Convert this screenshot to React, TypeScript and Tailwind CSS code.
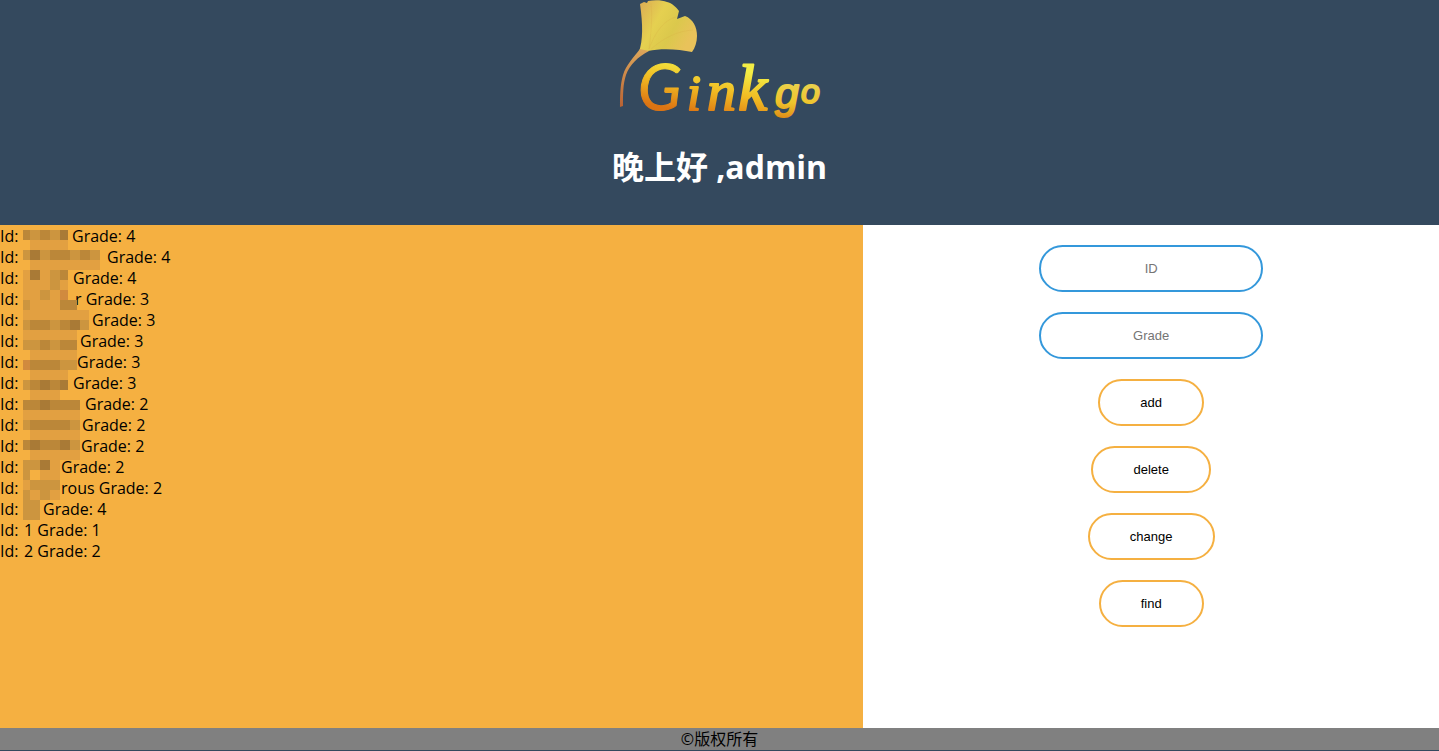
type Entry = { id?: string; gap?: string; grade: number };

const entries: Entry[] = [
  { gap: "w-12", grade: 4 },
  { gap: "w-[83px]", grade: 4 },
  { gap: "w-[49px]", grade: 4 },
  { gap: "w-[51px]", id: "r", grade: 3 },
  { gap: "w-[68px]", grade: 3 },
  { gap: "w-14", grade: 3 },
  { gap: "w-[53px]", grade: 3 },
  { gap: "w-[49px]", grade: 3 },
  { gap: "w-[61px]", grade: 2 },
  { gap: "w-[58px]", grade: 2 },
  { gap: "w-[57px]", grade: 2 },
  { gap: "w-[37px]", grade: 2 },
  { gap: "w-[37px]", id: "rous", grade: 2 },
  { gap: "w-[19px]", grade: 4 },
  { id: "1", grade: 1 },
  { id: "2", grade: 2 },
];

// One string per 10px band: shade letters by column, then the band's right edge.
const bands: [string, number][] = [
  ["dmdmD", 45], [".llll", 45], ["mDmddmdm", 77], [".lllllll", 77],
  ["lDlmd", 45], ["lllml", 45], ["llmlc", 45], ["mllldd", 54],
  ["lllllll", 66], ["mddmdDm", 66], ["llllll", 54], ["mmdmdd", 54],
  [".lllll", 54], ["cdddmm", 54], [".llll", 45], ["mdDdD", 45],
  [".lll", 37], ["ddDddd", 57], ["llllll", 57], ["mddddm", 57],
  [".lllll", 57], ["dDddDm", 60], [".lllll", 57], ["mmDl", 37],
  ["m.ll", 37], ["lmmm", 37], ["mlml", 37], ["mm", 17], ["mm", 17],
];

const shades: Record<string, string> = {
  l: "#e2a041",
  m: "#cc953f",
  c: "#d18a3e",
  d: "#bb8739",
  D: "#a97a36",
};

function Mosaic() {
  return (
    <svg
      className="pointer-events-none absolute left-[23px] top-[5px]"
      width="80"
      height="290"
      shapeRendering="crispEdges"
      aria-hidden="true"
    >
      {bands.map(([cells, end], row) =>
        cells.split("").map((cell, col) => {
          if (cell === ".") return null;
          const x = col === 0 ? 0 : col * 10 - 3;
          const right = Math.min(col * 10 + 7, end);
          return (
            <rect key={`${row}-${col}`} x={x} y={row * 10} width={Math.max(right - x, 0)} height="10" fill={shades[cell]} />
          );
        }),
      )}
    </svg>
  );
}

function Logo() {
  return (
    <svg className="overflow-visible" width="204" height="122" viewBox="0 0 204 122" role="img" aria-label="Ginkgo">
      <defs>
        <linearGradient id="leaf" x1="0" y1="0" x2="1" y2="0.5">
          <stop offset="0" stopColor="#dcaa55" />
          <stop offset="0.4" stopColor="#e5d050" />
          <stop offset="0.7" stopColor="#dbc84c" />
          <stop offset="1" stopColor="#e9c25a" />
        </linearGradient>
        <linearGradient id="stem" x1="0" y1="0" x2="0" y2="1">
          <stop offset="0" stopColor="#dda75b" />
          <stop offset="1" stopColor="#b96233" />
        </linearGradient>
        <linearGradient id="word" gradientUnits="userSpaceOnUse" x1="90" y1="64" x2="80" y2="114">
          <stop offset="0" stopColor="#f3ed45" />
          <stop offset="0.5" stopColor="#f0b922" />
          <stop offset="1" stopColor="#dc7413" />
        </linearGradient>
        <linearGradient id="tail" gradientUnits="userSpaceOnUse" x1="180" y1="78" x2="176" y2="120">
          <stop offset="0" stopColor="#e9d455" />
          <stop offset="0.6" stopColor="#efc42c" />
          <stop offset="1" stopColor="#df8a16" />
        </linearGradient>
      </defs>
      <path
        d="M22 4 L26 2 L29 3 L30 1 C36 0 44 0 49 2 C54 3 58 7 61 11 L59 19 L67 16 C75 19 79 27 79 36 C79 42 77 48 74 52 C61 49 43 48 30 51 L21 52 C25 40 25 25 22 4Z"
        fill="url(#leaf)"
      />
      <path d="M31 49 C38 30 47 20 58 17 M31 49 C34 28 34 12 33 3 M33 49 C47 37 60 31 75 30" stroke="#d6ad45" strokeOpacity="0.25" fill="none" />
      <path d="M22 49 C16 57 8 65 5 75 C2 85 2 98 2 107 L5 106 C5 94 5 84 8 75 C12 64 20 57 31 51Z" fill="url(#stem)" />
      <g
        fill="url(#word)"
        stroke="url(#word)"
        strokeLinejoin="round"
        strokeWidth="2"
        fontFamily="'Liberation Serif', serif"
        fontStyle="italic"
      >
        <text x="20" y="110" fontSize="64" strokeWidth="1" fontFamily="Lato, sans-serif">G</text>
        <text x="69" y="110" fontSize="50">i</text>
        <text x="89" y="110" fontSize="58">n</text>
        <text x="120" y="110" fontSize="66">k</text>
      </g>
      <g
        fill="url(#tail)"
        stroke="url(#tail)"
        strokeLinejoin="round"
        strokeWidth="2"
        fontFamily="'Liberation Sans', sans-serif"
        fontStyle="italic"
      >
        <text x="157" y="108" fontSize="43">g</text>
        <text x="183" y="103" fontSize="34">o</text>
      </g>
    </svg>
  );
}

const fieldClass =
  "h-[47px] w-56 rounded-3xl border-2 border-[#3498db] bg-transparent text-center font-[Liberation_Sans,Arial,sans-serif] text-[13px] text-black outline-none placeholder:text-[#757575]";

export default function App() {
  return (
    <div className="flex min-h-screen flex-col bg-[#34495e] pb-px font-[Open_Sans,Noto_Sans_CJK_SC,sans-serif] text-base leading-[21px] text-black">
      <header className="flex flex-col items-center bg-[#34495e] pb-[37px] text-white">
        <Logo />
        <h1 className="mt-[23px] text-[32px] font-bold leading-[43px]">晚上好 ,admin</h1>
      </header>
      <main className="flex flex-1">
        <section className="relative w-3/5 bg-[#f5b041]" aria-label="Grades">
          <ul className="pt-px">
            {entries.map((entry, index) => (
              <li key={index} className="flex h-[21px] items-center whitespace-pre">
                <span className="w-6">Id:</span>
                {entry.gap && <span className={entry.gap} />}
                <span>{entry.id ? `${entry.id} ` : ""}Grade: {entry.grade}</span>
              </li>
            ))}
          </ul>
          <Mosaic />
        </section>
        <form className="flex w-2/5 flex-col items-center gap-5 bg-white pt-5" onSubmit={(e) => e.preventDefault()}>
          <input className={fieldClass} type="text" placeholder="ID" aria-label="ID" />
          <input className={fieldClass} type="text" placeholder="Grade" aria-label="Grade" />
          {["add", "delete", "change", "find"].map((label) => (
            <button
              key={label}
              type="button"
              className="h-[47px] rounded-3xl border-2 border-[#f5b041] px-10 font-[Liberation_Sans,Arial,sans-serif] text-[13px] text-black"
            >
              {label}
            </button>
          ))}
        </form>
      </main>
      <footer className="h-[22px] bg-[#808080] text-center leading-[22px]">©版权所有</footer>
    </div>
  );
}
